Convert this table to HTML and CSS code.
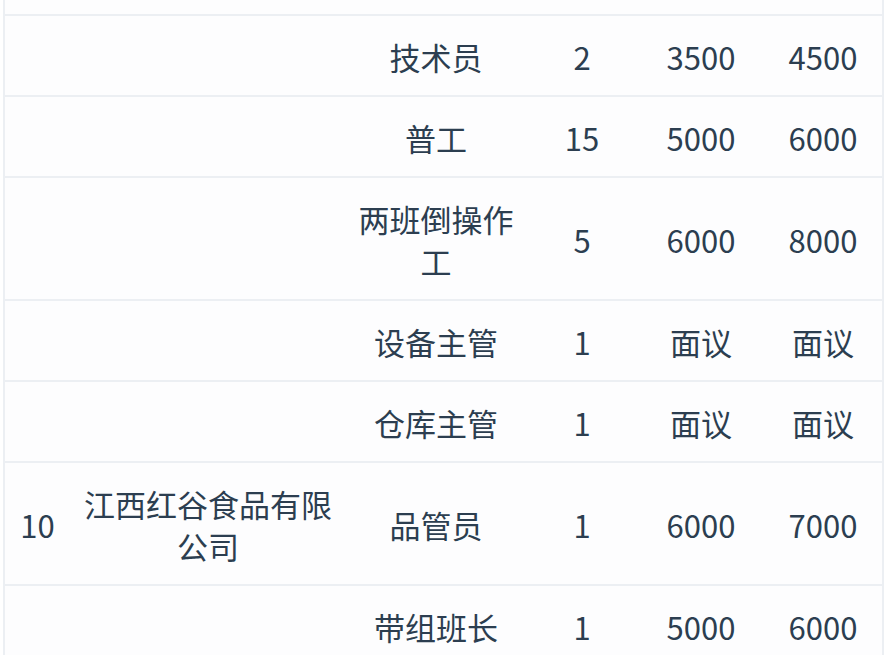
FILE: index.html
```html
<!DOCTYPE html>
<html lang="zh-CN">
<head>
<meta charset="utf-8">
<title>招聘信息</title>
<link rel="stylesheet" href="styles.css">
</head>
<body>
<div class="wrap">
<table class="jobs">
<colgroup>
<col class="c1"><col class="c2"><col class="c3"><col class="c4"><col class="c5"><col class="c6">
</colgroup>
<tbody>
<tr class="cut"><td></td><td></td><td></td><td></td><td></td><td></td></tr>
<tr><td></td><td></td><td>技术员</td><td>2</td><td>3500</td><td>4500</td></tr>
<tr><td></td><td></td><td>普工</td><td>15</td><td>5000</td><td>6000</td></tr>
<tr><td></td><td></td><td>两班倒操作工</td><td>5</td><td>6000</td><td>8000</td></tr>
<tr><td></td><td></td><td>设备主管</td><td>1</td><td>面议</td><td>面议</td></tr>
<tr><td></td><td></td><td>仓库主管</td><td>1</td><td>面议</td><td>面议</td></tr>
<tr><td>10</td><td>江西红谷食品有限公司</td><td>品管员</td><td>1</td><td>6000</td><td>7000</td></tr>
<tr><td></td><td></td><td>带组班长</td><td>1</td><td>5000</td><td>6000</td></tr>
</tbody>
</table>
</div>
</body>
</html>
```

FILE: styles.css
```css
html, body {
  margin: 0;
  padding: 0;
  background: #ffffff;
}
.wrap {
  padding-left: 3px;
  height: 655px;
  overflow: hidden;
}
.jobs {
  width: 881px;
  table-layout: fixed;
  border-collapse: separate;
  border-spacing: 0;
  border-left: 2px solid #eceff3;
  border-right: 2px solid #eceff3;
  background: #fdfdfe;
  font-family: "Noto Sans CJK SC", "Noto Sans", sans-serif;
  font-size: 31px;
  line-height: 42px;
  color: #2c3e50;
}
.c1 { width: 65px; }
.c2 { width: 276px; }
.c3 { width: 180px; }
.c4 { width: 112px; }
.c5 { width: 126px; }
.c6 { width: 118px; }
.jobs td {
  padding: 20px 10px 17px;
  text-align: center;
  vertical-align: middle;
  border-bottom: 2px solid #eceff3;
}
.jobs .cut td {
  padding: 0;
  height: 14px;
  line-height: 14px;
}
```
